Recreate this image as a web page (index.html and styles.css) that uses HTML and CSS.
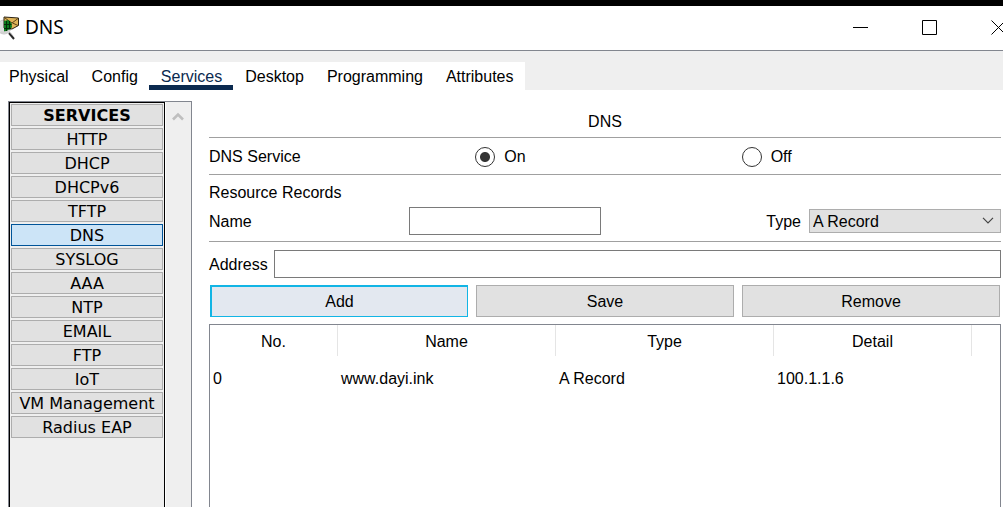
FILE: index.html
```html
<!DOCTYPE html>
<html lang="en">
<head>
<meta charset="utf-8">
<title>DNS</title>
<link rel="stylesheet" href="styles.css">
</head>
<body>
<header class="titlebar">
  <svg class="app-icon" width="20" height="24" viewBox="0 0 20 24" aria-hidden="true">
    <circle cx="4" cy="11" r="7" fill="#dedede" stroke="#c8c8c8"/>
    <path d="M4 1L18.500 2L18.500 9.500L12 13L4 12Z" fill="#dfb458" stroke="#2d2413"/>
    <path d="M5 2L12 7L18 2.500M12.500 7L18 9.500" fill="none" stroke="#5c4318"/>
    <path d="M4 5L8 4L11.500 7L12 11L9 15L4 15.500Z" fill="#0a7a1c"/>
    <path d="M4 8.500H11.500M4 12.500H11M6.500 5V15M9.500 5V14" stroke="#032b08"/>
    <path d="M1 16Q6 18 10 14" fill="none" stroke="#d2d2d2" stroke-width="2"/>
    <path d="M9 17L14 23" stroke="#2a2a2a" stroke-width="2"/>
    <path d="M10 16.500L13 20" stroke="#999"/>
  </svg>
  <h1 class="window-title">DNS</h1>
  <div class="window-controls">
    <button class="window-button" type="button" aria-label="Minimize"><svg width="16" height="16" viewBox="0 0 16 16"><path d="M0 8.5H15"/></svg></button>
    <button class="window-button" type="button" aria-label="Maximize"><svg width="16" height="16" viewBox="0 0 16 16"><path d="M.5 1.5H14.5V15.5H.5Z"/></svg></button>
    <button class="window-button" type="button" aria-label="Close"><svg width="16" height="16" viewBox="0 0 16 16"><path d="M.5 1.5L14.5 15.5M14.5 1.5L.5 15.5"/></svg></button>
  </div>
</header>
<nav class="tabbar">
  <div class="tabs">
    <a class="tab" href="#physical">Physical</a>
    <a class="tab" href="#config">Config</a>
    <a class="tab tab-active" href="#services">Services</a>
    <a class="tab" href="#desktop">Desktop</a>
    <a class="tab" href="#programming">Programming</a>
    <a class="tab" href="#attributes">Attributes</a>
  </div>
</nav>
<div class="workspace">
  <aside class="sidebar">
    <div class="service-list">
      <button class="service service-heading" type="button">SERVICES</button>
      <button class="service" type="button">HTTP</button>
      <button class="service" type="button">DHCP</button>
      <button class="service" type="button">DHCPv6</button>
      <button class="service" type="button">TFTP</button>
      <button class="service service-active" type="button">DNS</button>
      <button class="service" type="button">SYSLOG</button>
      <button class="service" type="button">AAA</button>
      <button class="service" type="button">NTP</button>
      <button class="service" type="button">EMAIL</button>
      <button class="service" type="button">FTP</button>
      <button class="service" type="button">IoT</button>
      <button class="service" type="button">VM Management</button>
      <button class="service" type="button">Radius EAP</button>
    </div>
    <div class="scrollbar">
      <svg width="12" height="9" viewBox="0 0 12 9" aria-hidden="true"><path d="M1 7.500L6 2.500L11 7.500" fill="none" stroke="#bfbfbf" stroke-width="2.6"/></svg>
    </div>
  </aside>
  <main class="panel">
    <h2 class="panel-title">DNS</h2>
    <div class="service-row">
      <span>DNS Service</span>
      <label class="radio"><input type="radio" name="dns" checked>On</label>
      <label class="radio"><input type="radio" name="dns">Off</label>
    </div>
    <section class="record-form">
      <h3 class="section-title">Resource Records</h3>
      <div class="record-row">
        <label class="caption" for="name">Name</label>
        <input class="field" id="name" type="text">
        <label class="caption type-label" for="type">Type</label>
        <div class="select-wrap">
          <select class="select" id="type"><option>A Record</option></select>
          <svg class="chevron" width="12" height="7" viewBox="0 0 12 7" aria-hidden="true"><path d="M1 .8L6 5.8L11 .8" fill="none" stroke="#444" stroke-width="1.2"/></svg>
        </div>
      </div>
    </section>
    <div class="address-row">
      <label class="caption" for="address">Address</label>
      <input class="field" id="address" type="text">
    </div>
    <div class="actions">
      <button class="action action-focus" type="button">Add</button>
      <button class="action" type="button">Save</button>
      <button class="action" type="button">Remove</button>
    </div>
    <div class="records">
      <table class="records-table">
        <colgroup><col class="col-no"><col class="col-wide"><col class="col-wide"><col class="col-detail"><col></colgroup>
        <thead><tr><th>No.</th><th>Name</th><th>Type</th><th>Detail</th><td></td></tr></thead>
        <tbody><tr><td>0</td><td>www.dayi.ink</td><td>A Record</td><td>100.1.1.6</td><td></td></tr></tbody>
      </table>
    </div>
  </main>
</div>
</body>
</html>
```
FILE: styles.css
```css
* { box-sizing: border-box; }
body {
  margin: 0;
  height: 100vh;
  display: flex;
  flex-direction: column;
  overflow: hidden;
  background: #fff;
  color: #000;
  font: 16px/20px "Liberation Sans", Arial, sans-serif;
}
button, input, select { font: inherit; color: inherit; }
h1, h2, h3 { margin: 0; font-weight: 400; }

.titlebar {
  display: flex;
  align-items: center;
  flex: none;
  height: 51px;
  border-top: 6px solid #000;
  border-bottom: 1px solid #82868f;
  overflow: hidden;
}
.app-icon { flex: none; }
.window-title {
  padding: 0 0 2px 5px;
  font: 19px/24px "Noto Sans", "Open Sans", sans-serif;
}
.window-controls {
  display: flex;
  gap: 53px;
  margin-left: auto;
  margin-right: -4px;
  padding-bottom: 2px;
}
.window-button {
  display: flex;
  width: 16px;
  padding: 0;
  border: 0;
  background: none;
}
.window-button svg { fill: none; stroke: #000; }

.tabbar {
  display: flex;
  flex: none;
  padding-top: 11px;
  background: #efefef;
}
.tabs {
  display: flex;
  background: #fff;
}
.tab {
  height: 28px;
  padding: 5px 11px 0 12px;
  border-bottom: 5px solid transparent;
  color: #000;
  text-decoration: none;
}
.tab:first-child { padding-left: 9px; }
.tab-active { border-color: #0b2a4f; color: #0b2a4f; }

.workspace {
  display: flex;
  flex: 1;
  min-height: 0;
  gap: 17px;
  padding: 11px 2px 0 8px;
}
.sidebar {
  display: flex;
  flex: none;
  width: 184px;
  border: 1px solid #82868f;
  border-bottom: 0;
  background: #efefef;
  overflow: hidden;
}
.service-list {
  display: flex;
  flex-direction: column;
  gap: 2px;
  width: 156px;
  padding: 1px;
  border: 1px solid #000;
  border-bottom: 0;
}
.service {
  flex: none;
  height: 22px;
  padding: 1px 0 0;
  border: 1px solid #adadad;
  background: #e1e1e1;
  font: 16px/19px "DejaVu Sans", Verdana, sans-serif;
  white-space: nowrap;
}
.service-heading { font-weight: 700; }
.service-active { border-color: #005499; background: #cce4f7; }
.scrollbar {
  display: flex;
  flex: 1;
  justify-content: center;
  padding: 10px 1px 0 0;
  border-left: 1px solid #fff;
}

.panel {
  display: flex;
  flex: 1;
  flex-direction: column;
  min-width: 0;
}
.panel-title {
  padding: 11px 0 5px;
  border-bottom: 1px solid #a0a0a0;
  font-size: 16px;
  text-align: center;
}
.service-row {
  display: grid;
  grid-template-columns: repeat(3, 1fr);
  gap: 8px;
  align-items: center;
  padding: 9px 1px 7px 0;
  border-bottom: 1px solid #a0a0a0;
}
.radio { display: flex; align-items: center; gap: 9px; }
.radio input {
  appearance: none;
  width: 20px;
  height: 20px;
  margin: 0;
  border: 1px solid #333;
  border-radius: 50%;
  background: #fff;
}
.radio input:checked { background: radial-gradient(circle, #333 4.5px, #fff 5.5px); }
.record-form { padding: 8px 0 6px; border-bottom: 1px solid #a0a0a0; }
.section-title { margin-bottom: 4px; font-size: 16px; }
.record-row {
  display: grid;
  grid-template-columns: repeat(4, 1fr);
  gap: 8px;
  align-items: center;
}
.caption { padding-top: 2px; }
.type-label { text-align: right; }
.field {
  width: 100%;
  min-width: 0;
  height: 28px;
  padding: 0 4px;
  border: 1px solid #7a7a7a;
  border-radius: 0;
  background: #fff;
}
.select-wrap { position: relative; display: flex; }
.select {
  appearance: none;
  width: 100%;
  height: 24px;
  padding: 2px 3px 0;
  border: 1px solid #adadad;
  border-radius: 0;
  background: #e1e1e1;
}
.chevron {
  position: absolute;
  top: 8px;
  right: 7px;
  pointer-events: none;
}
.address-row {
  display: flex;
  align-items: center;
  gap: 6px;
  padding: 8px 0 7px;
}
.actions {
  display: grid;
  grid-template-columns: repeat(3, 1fr);
  gap: 8px;
  padding: 0 1px 7px;
}
.action {
  height: 32px;
  padding: 1px 0 0;
  border: 1px solid #adadad;
  background: #e1e1e1;
}
.action-focus {
  border: 1px solid #12b5e5;
  border-width: 2px 1px 1px 2px;
  background: #e3e8f0;
}
.records {
  flex: 1;
  border: 1px solid #82868f;
  border-bottom: 0;
}
.records-table {
  width: 100%;
  border-collapse: separate;
  border-spacing: 0;
  table-layout: fixed;
}
.col-no { width: 128px; }
.col-wide { width: 218px; }
.col-detail { width: 198px; }
.records-table th {
  height: 31px;
  padding: 2px 0 0;
  border-right: 1px solid #e5e5e5;
  font-weight: 400;
}
.records-table td { padding: 0 3px; }
.records-table tbody td { height: 46px; }
```
